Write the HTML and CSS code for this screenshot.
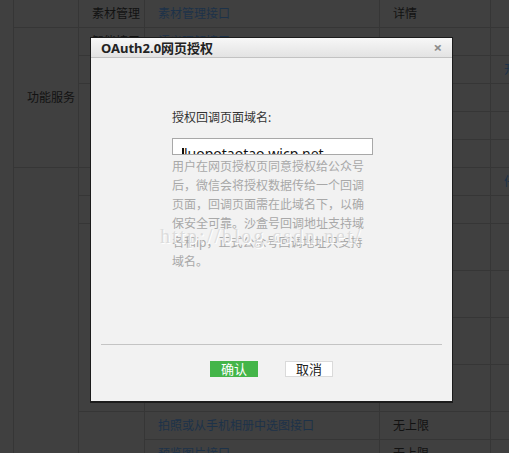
FILE: index.html
```html
<!DOCTYPE html>
<html>
<head>
    <meta charset="utf-8">
    <title>OAuth2.0网页授权</title>
    <link rel="stylesheet" href="styles.css">
</head>
<body>
    <div class="table">
        <div class="cell"></div>
        <div class="cell">素材管理</div>
        <div class="cell link">素材管理接口</div>
        <div class="cell">详情</div>
        <div class="cell link"></div>

        <div class="cell span5">功能服务</div>
        <div class="cell">智能接口</div>
        <div class="cell link">语义理解接口</div>
        <div class="cell"></div>
        <div class="cell link"></div>

        <div class="cell">设备功能</div>
        <div class="cell link">设备功能接口</div>
        <div class="cell"></div>
        <div class="cell link">开通</div>

        <div class="cell span3">多客服</div>
        <div class="cell link">获取客服聊天记录接口</div>
        <div class="cell"></div>
        <div class="cell link"></div>

        <div class="cell link">客服管理接口</div>
        <div class="cell"></div>
        <div class="cell link"></div>

        <div class="cell link">会话控制接口</div>
        <div class="cell"></div>
        <div class="cell link"></div>

        <div class="cell span8"></div>
        <div class="cell">基础接口</div>
        <div class="cell link">判断当前客户端版本是否支持指定JS接口</div>
        <div class="cell"></div>
        <div class="cell link">仔细</div>

        <div class="cell">分享接口</div>
        <div class="cell link">获取分享状态接口</div>
        <div class="cell"></div>
        <div class="cell link"></div>

        <div class="cell span4">图像接口</div>
        <div class="cell link">分享到朋友圈接口</div>
        <div class="cell">无上限</div>
        <div class="cell link"></div>

        <div class="cell link">分享给朋友接口</div>
        <div class="cell">无上限</div>
        <div class="cell link"></div>

        <div class="cell link">分享到QQ接口</div>
        <div class="cell">无上限</div>
        <div class="cell link"></div>

        <div class="cell link">分享到腾讯微博接口</div>
        <div class="cell">无上限</div>
        <div class="cell link"></div>

        <div class="cell span2"></div>
        <div class="cell link">拍照或从手机相册中选图接口</div>
        <div class="cell">无上限</div>
        <div class="cell link"></div>

        <div class="cell link">预览图片接口</div>
        <div class="cell">无上限</div>
        <div class="cell link"></div>
    </div>

    <div class="dialog">
        <div class="dialog-head">
            <span class="dialog-title">OAuth2.0网页授权</span>
            <span class="dialog-close">×</span>
        </div>
        <div class="dialog-body">
            <div class="field-label">授权回调页面域名:</div>
            <div class="field"><span class="caret"></span>luopotaotao.wicp.net</div>
            <p class="hint">用户在网页授权页同意授权给公众号后，微信会将授权数据传给一个回调页面，回调页面需在此域名下，以确保安全可靠。沙盒号回调地址支持域名和ip，正式公众号回调地址只支持域名。</p>
            <div class="watermark">http://blog.csdn.net/</div>
        </div>
        <div class="dialog-line"></div>
        <div class="dialog-foot">
            <button class="btn btn-ok">确认</button>
            <button class="btn btn-cancel">取消</button>
        </div>
    </div>
</body>
</html>
```

FILE: styles.css
```css
body {
    margin: 0;
    padding: 0 0 0 13px;
    background: #404040;
    overflow: hidden;
    font-family: "Noto Sans", "Noto Sans CJK SC", sans-serif;
    font-size: 12px;
    height: 453px;
}
.table {
    display: grid;
    grid-template-columns: 65px 66px 235px 111px 120px;
    grid-template-rows: repeat(8, 28px) repeat(4, 47px) 28px 28px;
    border-left: 1px solid #363636;
    width: 600px;
}
.cell {
    box-sizing: border-box;
    border-right: 1px solid #363636;
    border-bottom: 1px solid #363636;
    display: flex;
    align-items: center;
    padding: 0 0 0 13px;
    color: #121212;
    white-space: nowrap;
    overflow: hidden;
    line-height: 1;
}
.link {
    color: #1d3249;
}
.span2 { grid-row: span 2; }
.span3 { grid-row: span 3; }
.span4 { grid-row: span 4; }
.span5 { grid-row: span 5; }
.span8 { grid-row: span 8; }

.dialog {
    position: absolute;
    left: 90px;
    top: 37px;
    width: 363px;
    height: 365px;
    box-sizing: border-box;
    border: 1px solid #1c1c1c;
    box-shadow: 0 1px 0 #1c1c1c;
    background: #f2f2f2;
    display: flex;
    flex-direction: column;
}
.dialog-head {
    height: 19px;
    border-bottom: 1px solid #c2c2c2;
    background: linear-gradient(#f7f7f7, #e3e3e3);
    display: flex;
    align-items: center;
    justify-content: space-between;
    padding: 0 10px;
}
.dialog-title {
    font-size: 13px;
    font-weight: bold;
    color: #222;
}
.dialog-close {
    font-size: 15px;
    font-weight: bold;
    color: #8c8c8c;
    line-height: 1;
}
.dialog-body {
    position: relative;
    height: 286px;
    box-sizing: border-box;
    padding: 50px 0 0 81px;
}
.field-label {
    line-height: 19px;
    color: #333;
}
.field {
    margin-top: 11px;
    width: 201px;
    height: 17px;
    box-sizing: border-box;
    border: 1px solid #a8a8a8;
    background: #fff;
    overflow: hidden;
    padding: 7px 0 0 9px;
    font-size: 14px;
    line-height: 15px;
    color: #111;
    white-space: nowrap;
}
.caret {
    display: inline-block;
    width: 2px;
    height: 14px;
    background: #111;
    vertical-align: -3px;
}
.hint {
    margin: 2px 0 0;
    width: 200px;
    line-height: 19px;
    color: #a8a8a8;
}
.watermark {
    position: absolute;
    left: 69px;
    top: 167px;
    font-family: "Liberation Serif", serif;
    font-size: 20px;
    letter-spacing: 2px;
    color: #dcdcdc;
    text-shadow: 1px 1px 0 #fff;
}
.dialog-line {
    height: 1px;
    margin: 0 10px;
    background: #c4c4c4;
}
.dialog-foot {
    flex: 1;
    display: flex;
    justify-content: center;
    gap: 27px;
    padding-top: 16px;
}
.btn {
    width: 48px;
    height: 16px;
    padding: 0;
    font-family: inherit;
    font-size: 13px;
    line-height: 14px;
    border: 1px solid transparent;
    box-sizing: border-box;
}
.btn-ok {
    background: #44b549;
    color: #fff;
    border-color: #44b549;
}
.btn-cancel {
    background: #fff;
    color: #222;
    border-color: #dadada;
}
```
